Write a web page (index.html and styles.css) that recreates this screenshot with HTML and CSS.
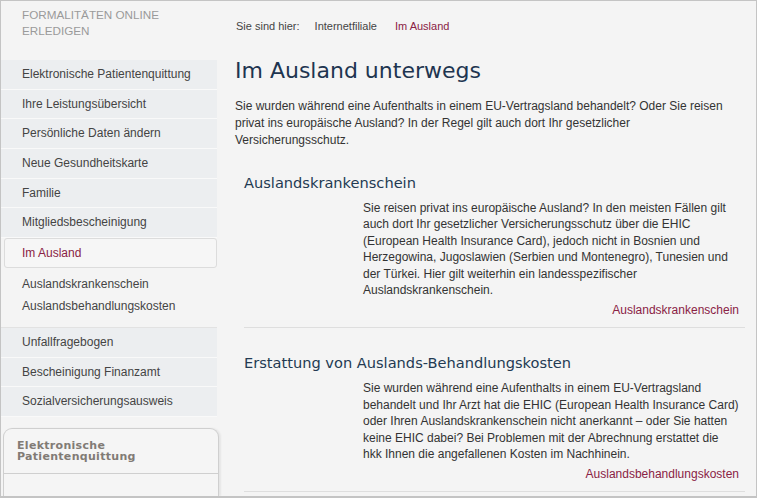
FILE: index.html
```html
<!DOCTYPE html>
<html lang="de">
<head>
<meta charset="utf-8">
<title>Im Ausland unterwegs</title>
<link rel="stylesheet" href="styles.css">
</head>
<body>
<div class="page">
  <aside class="sidebar">
    <div class="side-title">FORMALITÄTEN ONLINE ERLEDIGEN</div>
    <ul class="menu">
      <li class="item">Elektronische Patientenquittung</li>
      <li class="item">Ihre Leistungsübersicht</li>
      <li class="item">Persönliche Daten ändern</li>
      <li class="item">Neue Gesundheitskarte</li>
      <li class="item">Familie</li>
      <li class="item">Mitgliedsbescheinigung</li>
      <li class="item active">Im Ausland</li>
      <li class="subs">
        <div class="sub">Auslandskrankenschein</div>
        <div class="sub">Auslandsbehandlungskosten</div>
      </li>
      <li class="item">Unfallfragebogen</li>
      <li class="item">Bescheinigung Finanzamt</li>
      <li class="item">Sozialversicherungsausweis</li>
    </ul>
    <div class="promo">
      <div class="promo-title">Elektronische Patientenquittung</div>
    </div>
  </aside>
  <main class="main">
    <nav class="crumbs">
      <span class="crumb">Sie sind hier:</span>
      <span class="crumb">Internetfiliale</span>
      <span class="crumb current">Im Ausland</span>
    </nav>
    <h1 class="title">Im Ausland unterwegs</h1>
    <p class="intro">Sie wurden während eine Aufenthalts in einem EU-Vertragsland behandelt? Oder Sie reisen privat ins europäische Ausland? In der Regel gilt auch dort Ihr gesetzlicher Versicherungsschutz.</p>
    <section class="block">
      <h2 class="block-title">Auslandskrankenschein</h2>
      <p class="block-text">Sie reisen privat ins europäische Ausland? In den meisten Fällen gilt auch dort Ihr gesetzlicher Versicherungsschutz über die EHIC (European Health Insurance Card), jedoch nicht in Bosnien und Herzegowina, Jugoslawien (Serbien und Montenegro), Tunesien und der Türkei. Hier gilt weiterhin ein landesspezifischer Auslandskrankenschein.</p>
      <div class="block-link"><a href="#">Auslandskrankenschein</a></div>
    </section>
    <section class="block">
      <h2 class="block-title">Erstattung von Auslands-Behandlungskosten</h2>
      <p class="block-text">Sie wurden während eine Aufenthalts in einem EU-Vertragsland behandelt und Ihr Arzt hat die EHIC (European Health Insurance Card) oder Ihren Auslandskrankenschein nicht anerkannt – oder Sie hatten keine EHIC dabei? Bei Problemen mit der Abrechnung erstattet die<br>hkk Ihnen die angefallenen Kosten im Nachhinein.</p>
      <div class="block-link"><a href="#">Auslandsbehandlungskosten</a></div>
    </section>
  </main>
</div>
</body>
</html>
```

FILE: styles.css
```css
html, body {
  margin: 0;
  padding: 0;
  background: #f4f4f4;
}
.page {
  box-sizing: border-box;
  width: 757px;
  height: 498px;
  border: 1px solid #c4c4c4;
  border-bottom-width: 2px;
  display: flex;
  overflow: hidden;
  background: #f4f4f4;
  font-family: "Liberation Sans", Arial, sans-serif;
  color: #333;
}
.sidebar {
  width: 218px;
  flex: none;
  display: flex;
  flex-direction: column;
}
.side-title {
  height: 59px;
  flex: none;
  box-sizing: border-box;
  padding: 6px 0 0 21px;
  font-size: 11.7px;
  line-height: 16px;
  color: #9a9a9a;
  width: 170px;
}
.menu {
  list-style: none;
  margin: 0;
  padding: 0;
  width: 216px;
  flex: none;
}
.item {
  height: 28.67px;
  line-height: 28.67px;
  padding-left: 21px;
  font-size: 12px;
  color: #444;
  background: #eceef0;
  border-bottom: 1px solid #f9f9f9;
}
.item.active {
  background: #f6f6f6;
  color: #8a2244;
  border: 1px solid #dcdcdc;
  border-radius: 3px;
  margin-left: 3px;
  padding-left: 17px;
  height: 28px;
  line-height: 28px;
}
.subs {
  height: 60px;
  box-sizing: border-box;
  padding: 5px 0 0 21px;
  border-bottom: 1px solid #e2e2e2;
  font-size: 12px;
  color: #444;
}
.sub {
  line-height: 22px;
}
.promo {
  margin: 11px 0 0 2px;
  width: 214px;
  flex: 1;
  border: 1px solid #cfcfcf;
  border-bottom: none;
  border-radius: 9px 9px 0 0;
  background: #f5f5f5;
  box-shadow: 2px 0 2px rgba(0,0,0,0.06);
}
.promo-title {
  padding: 11px 60px 11px 13px;
  border-bottom: 1px solid #cfcfcf;
  font-family: "DejaVu Sans", Verdana, sans-serif;
  font-weight: bold;
  font-size: 11px;
  line-height: 11px;
  letter-spacing: 0.3px;
  color: #817b75;
}
.main {
  flex: 1;
  padding: 18px 10px 0 16px;
  min-width: 0;
}
.crumbs {
  display: flex;
  gap: 15px;
  font-size: 11px;
  line-height: 14px;
  color: #444;
  padding-left: 1px;
}
.crumb.current {
  color: #8a2244;
  margin-left: 3px;
}
.title {
  margin: 24px 0 0;
  font-family: "DejaVu Sans", Verdana, sans-serif;
  font-weight: normal;
  font-size: 22px;
  line-height: 28px;
  color: #1e3550;
}
.intro {
  margin: 13px 0 0;
  font-size: 12px;
  line-height: 17px;
  width: 510px;
}
.block {
  margin: 24px 0 0 9px;
  width: 501px;
  border-bottom: 1px solid #dedede;
}
.block + .block {
  margin-top: 25px;
}
.block-title {
  margin: 0;
  font-family: "DejaVu Sans", Verdana, sans-serif;
  font-weight: normal;
  font-size: 14.6px;
  line-height: 20px;
  color: #233a52;
}
.block-text {
  margin: 7px 0 0 119px;
  font-size: 12px;
  line-height: 16.4px;
}
.block-link {
  text-align: right;
  font-size: 12px;
  line-height: 16px;
  padding: 4px 6px 9px 0;
}
.block-link a {
  color: #8a2244;
  text-decoration: none;
}
```
